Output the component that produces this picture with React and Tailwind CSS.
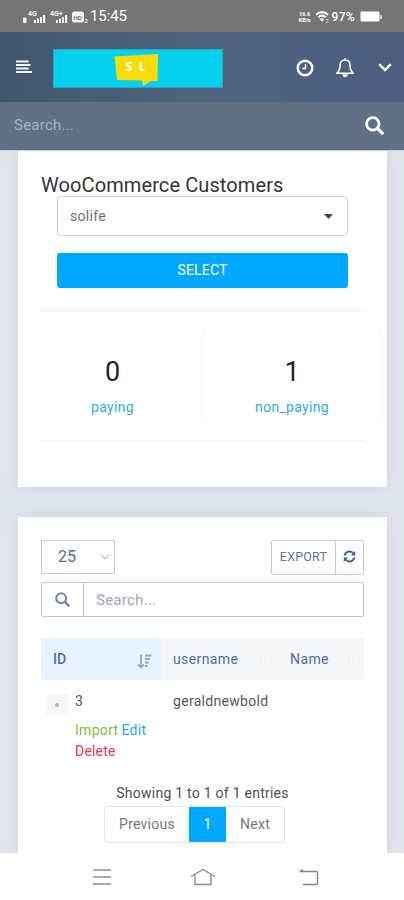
import { FaChevronDown } from 'react-icons/fa';

function Signal({ label }) {
  return (
    <div className="flex h-[15px] w-[19px] items-end">
      <svg viewBox="0 0 19 15" className="h-full w-full" fill="#f2f2f2">
        <text x="0" y="6.5" fontSize="7" fontWeight="700">{label}</text>
        <rect x="6" y="11" width="2" height="3" />
        <rect x="9" y="9.5" width="2" height="4.5" />
        <rect x="12" y="8" width="2" height="6" />
        <rect x="15" y="6" width="2.2" height="8" />
      </svg>
    </div>
  );
}

function SearchIcon({ className }) {
  return (
    <svg viewBox="0 0 18 18" className={className} fill="none" stroke="currentColor">
      <circle cx="7.4" cy="7.4" r="5.9" strokeWidth="2.6" />
      <path d="M12 12L16.3 16.3" strokeWidth="3" strokeLinecap="round" />
    </svg>
  );
}

function RefreshIcon() {
  return (
    <svg viewBox="0 0 24 24" className="h-[13px] w-[13px]" fill="currentColor">
      <path d="M2.8 10.2A9.5 9.5 0 0 1 18.8 5.6" fill="none" stroke="currentColor" strokeWidth="3.4" />
      <path d="M22.5 2V10H14.5Z" />
      <path d="M21.2 13.8A9.5 9.5 0 0 1 5.2 18.4" fill="none" stroke="currentColor" strokeWidth="3.4" />
      <path d="M1.5 22V14H9.5Z" />
    </svg>
  );
}

function StatusBar() {
  return (
    <div className="flex h-8 items-center bg-[#757575] pl-[22px] pr-[22px] pt-px text-white">
      <svg viewBox="0 0 5 15" className="h-[15px] w-[5px]" fill="#f2f2f2">
        <rect x="1" y="8.5" width="3.5" height="5.5" rx="0.8" />
      </svg>
      <div className="flex gap-[3px] pl-px">
        <Signal label="4G" />
        <Signal label="4G+" />
      </div>
      <svg viewBox="0 0 18 14" className="ml-[2px] h-[14px] w-[18px]">
        <rect x="1" y="1.5" width="12" height="11" rx="2.5" fill="#f2f2f2" />
        <text x="2.5" y="9.5" fontSize="6" fontWeight="700" fill="#757575">HD</text>
        <text x="13.5" y="12.5" fontSize="6" fontWeight="700" fill="#f2f2f2">2</text>
      </svg>
      <span className="ml-px text-[15px] tracking-[-0.1px]">15:45</span>
      <div className="ml-auto flex items-center">
        <div className="w-[14px] text-center text-[5.5px] font-bold leading-[6px]">
          <div>16.6</div>
          <div>KB/s</div>
        </div>
        <svg viewBox="0 0 15 13" className="ml-[3px] h-[13px] w-[15px]" fill="none" stroke="#fff" strokeWidth="2">
          <path d="M1 4.8Q7 -0.5 13 4.8M3.3 7.2Q7 4 10.7 7.2" />
          <path d="M5 9.2Q7 7.5 9 9.2L7 11.5Z" fill="#fff" strokeWidth="0.5" />
          <path d="M11 9.5h2.5M11 12h2.5" strokeWidth="0.8" />
        </svg>
        <span className="ml-[2px] text-[12px] font-medium tracking-[0.3px]">97%</span>
        <div className="ml-[5px] h-[11px] w-5 rounded-[2px] border border-[#bbb] bg-white" />
        <div className="h-1 w-[2px] bg-[#ccc]" />
      </div>
    </div>
  );
}

function Header() {
  return (
    <header className="flex h-[70px] items-center bg-linear-to-r from-[#41566c] via-[#4f647e] to-[#4e5d80] pl-4 pr-3 text-white">
      <svg viewBox="0 0 16 14" className="h-[14px] w-4" fill="#f3f6fa">
        <rect x="0" y="0.5" width="12.5" height="2" />
        <rect x="0" y="4" width="14.5" height="2" />
        <rect x="0" y="7.5" width="12.5" height="2" />
        <rect x="0" y="11" width="16" height="2" />
      </svg>
      <div className="ml-[21px] mt-[3px] flex h-[39px] w-[170px] border border-[#24aac8] bg-[#05d1ef]">
        <svg viewBox="0 0 168 37" className="h-full w-full">
          <path d="M60.5 6.5L104 4L103.5 31H97L89 36L88 30.5L63 30Z" fill="#f9dc05" />
          <text x="71.5" y="21" fontSize="12.5" fontWeight="700" fill="#fff" fontFamily="Noto Sans" wordSpacing="3">S L</text>
        </svg>
      </div>
      <div className="ml-auto flex items-center">
        <svg viewBox="0 0 18 18" className="mt-px h-[18px] w-[18px]" fill="none" stroke="#fff">
          <circle cx="9" cy="9" r="7.3" strokeWidth="2.5" />
          <path d="M9.5 5v4.6H6.2" strokeWidth="1.5" />
        </svg>
        <svg viewBox="0 0 20 21" className="ml-[21px] h-[21px] w-5" fill="none" stroke="#fff" strokeWidth="1.6">
          <path d="M10 1.2v1.6M1.7 16.3C4.5 14 5 11.5 5 8.5C5 5 7 3 10 3s5 2 5 5.5C15 11.5 15.5 14 18.3 16.3Z" strokeLinejoin="round" />
          <path d="M7.5 17.5h5Q12 20 10 20T7.5 17.5Z" fill="#fff" strokeWidth="0.5" />
        </svg>
        <FaChevronDown className="ml-[23px] h-[15px] w-[14px]" />
      </div>
    </header>
  );
}

function CustomersCard() {
  const stats = [
    { value: 0, label: 'paying' },
    { value: 1, label: 'non_paying' },
  ];

  return (
    <section className="h-[336px] overflow-hidden bg-white pl-[23px] pt-[22px] shadow-[0_0_14px_rgba(90,105,140,0.16)]">
      <h1 className="h-[23px] whitespace-nowrap text-[20px] leading-[24px] tracking-[0.1px] text-[#30343a]">
        WooCommerce Customers
      </h1>
      <div className="ml-4 flex h-10 w-[291px] items-center justify-between rounded-[4px] border border-[#d0d2d5] pl-3 pr-[14px]">
        <span className="text-[14px] tracking-[0.3px] text-[#6b6f76]">solife</span>
        <svg viewBox="0 0 9 5" className="h-[5px] w-[9px]" fill="#3f4656">
          <path d="M0 0h9L4.5 5Z" />
        </svg>
      </div>
      <button className="ml-4 mt-[17px] block h-[35px] w-[291px] rounded-[3px] bg-[#00a8ff] text-[14px] tracking-[0.2px] text-white">
        SELECT
      </button>
      <div className="mt-[22px] w-[324px] border-t border-[#eceef0]" />
      <div className="mt-5 flex h-[88px]">
        {stats.map((stat) => (
          <div
            key={stat.label}
            className="flex w-[179px] shrink-0 flex-col items-center border-r border-[#eff0f2] pt-[25px] first:w-[162px] first:pr-[18px]"
          >
            <span className="text-[27px] leading-[32px] text-[#222529]">{stat.value}</span>
            <span className="mt-[9px] text-[14px] leading-[20px] tracking-[0.3px] text-[#1fb0ea]">{stat.label}</span>
          </div>
        ))}
      </div>
      <div className="mt-[21px] w-[324px] border-t border-[#eff1f3]" />
    </section>
  );
}

function SortIcon() {
  return (
    <svg viewBox="0 0 15 15" className="mt-1 h-[15px] w-[15px]" fill="none" stroke="#91aacb" strokeWidth="1.8">
      <path d="M4 0.5v13M1 10.5l3 3l3-3M8 1.5h6.500M8 5h5M8 8.5h4M8 12h2.5" />
    </svg>
  );
}

function SortHandle() {
  return (
    <svg viewBox="0 0 8 12" className="h-3 w-2" stroke="#e9eef2" strokeWidth="1.2">
      <path d="M1.500 1v10M6.500 1v10" />
    </svg>
  );
}

function EntriesCard() {
  return (
    <section className="mt-[30px] h-[336px] bg-white px-[23px] pt-[23px] text-[14px] shadow-[0_0_14px_rgba(90,105,140,0.16)]">
      <div className="flex h-[36px] items-start justify-between">
        <div className="flex h-[34px] w-[74px] items-center justify-between rounded-[1px] border border-[#c7cacd] pl-4 pr-1">
          <span className="text-[16px] text-[#4e6ca2]">25</span>
          <svg viewBox="0 0 10 6" className="h-[6px] w-[10px]" fill="none" stroke="#9ba0a6">
            <path d="M1 0.5l4 4.5l4-4.5" />
          </svg>
        </div>
        <div className="flex h-[35px] w-[93px] rounded-[2px] border border-[#c7cacd] text-[#6077a9]">
          <button className="w-[64px] border-r border-[#c7cacd] text-[12.5px] tracking-[0.2px]">EXPORT</button>
          <button className="flex flex-1 items-center justify-center pb-0.5 text-[#2962ac]">
            <RefreshIcon />
          </button>
        </div>
      </div>
      <div className="mt-[6px] flex h-[35px] rounded-[2px] border border-[#c4c7cb]">
        <div className="flex w-[42px] items-center justify-center border-r border-[#c4c7cb] text-[#7188ae]">
          <SearchIcon className="h-[15px] w-[15px]" />
        </div>
        <span className="pl-3 text-[15px] leading-[34px] tracking-[0.25px] text-[#98a6bc]">Search...</span>
      </div>
      <div className="mt-[21px] flex h-[42px] items-center bg-[#f5f8fa] text-[#4b6da4]">
        <div className="flex h-full w-[120px] items-center justify-between bg-[#e7f4ff] pl-3 pr-[9px]">
          <span className="font-medium">ID</span>
          <SortIcon />
        </div>
        <div className="flex w-[118px] items-center justify-between pl-3 pr-3">
          <span className="tracking-[0.4px]">username</span>
          <SortHandle />
        </div>
        <div className="flex flex-1 items-center justify-between pl-[11px] pr-[9px]">
          <span className="tracking-[0.4px]">Name</span>
          <SortHandle />
        </div>
      </div>
      <div className="flex pt-[11px] leading-[21px] text-[#55585c]">
        <div className="ml-[5px] mt-[3px] flex h-[21px] w-[22px] items-center justify-center rounded-[2px] bg-[#f5f7f8]">
          <span className="h-1 w-1 rounded-full bg-[#adb9c0]" />
        </div>
        <div className="ml-[7px] w-[98px]">
          <div>3</div>
          <div className="mt-[8px] flex flex-wrap gap-x-[3px]">
            <span className="tracking-[0.3px] text-[#83bd37]">Import</span>
            <span className="tracking-[0.3px] text-[#24a9e6]">Edit</span>
            <span className="w-full tracking-[0.2px] text-[#e83456]">Delete</span>
          </div>
        </div>
        <span className="tracking-[0.3px]">geraldnewbold</span>
      </div>
      <div className="mt-[21px] text-center leading-[21px] tracking-[0.25px] text-[#4c4e51]">
        Showing 1 to 1 of 1 entries
      </div>
      <div className="ml-[63px] mt-[2px] flex h-[37px] w-[181px] items-stretch overflow-hidden rounded-[4px] border border-[#e4e6e8] text-[#76797d]">
        <button className="w-[84px] tracking-[0.25px]">Previous</button>
        <button className="w-[37px] bg-[#00a8ff] text-white">1</button>
        <button className="w-[58px] tracking-[0.25px]">Next</button>
      </div>
    </section>
  );
}

function NavBar() {
  return (
    <nav className="flex h-[47px] items-center bg-white pl-[92px]">
      <svg viewBox="0 0 20 18" className="h-[18px] w-5" stroke="#8d8d8d" strokeWidth="1.4">
        <path d="M1 2h18M1 9h18M1 16h18" />
      </svg>
      <svg viewBox="0 0 26 18" className="ml-[78px] h-[18px] w-[26px]" fill="none" stroke="#8b8b8b" strokeWidth="1.4">
        <path d="M1 8.5L13 1.5L25 8.5M5 7v9.5h16V7" />
      </svg>
      <svg viewBox="0 0 20 18" className="ml-[83px] h-[18px] w-5" fill="none" stroke="#858585" strokeWidth="1.4">
        <path d="M0.5 3.5H17.5Q18.5 3.5 18.5 4.5V15.5Q18.5 16.5 17.5 16.5H4M4 1.5L1 3.5" />
      </svg>
    </nav>
  );
}

export default function App() {
  return (
    <div className="flex h-[900px] w-[404px] flex-col overflow-hidden bg-white font-['Roboto',sans-serif]">
      <StatusBar />
      <Header />
      <div className="flex h-12 items-center justify-between bg-[#617085] pb-0.5 pl-[14px] pr-5">
        <span className="text-[15px] tracking-[0.25px] text-[#9fb2cf]">Search...</span>
        <SearchIcon className="h-[19px] w-[19px] text-white" />
      </div>
      <main className="h-[703px] overflow-hidden border-t border-[#c3cfe0] bg-[#e1e6ee] pl-[18px] pr-[17px]">
        <CustomersCard />
        <EntriesCard />
      </main>
      <NavBar />
    </div>
  );
}
